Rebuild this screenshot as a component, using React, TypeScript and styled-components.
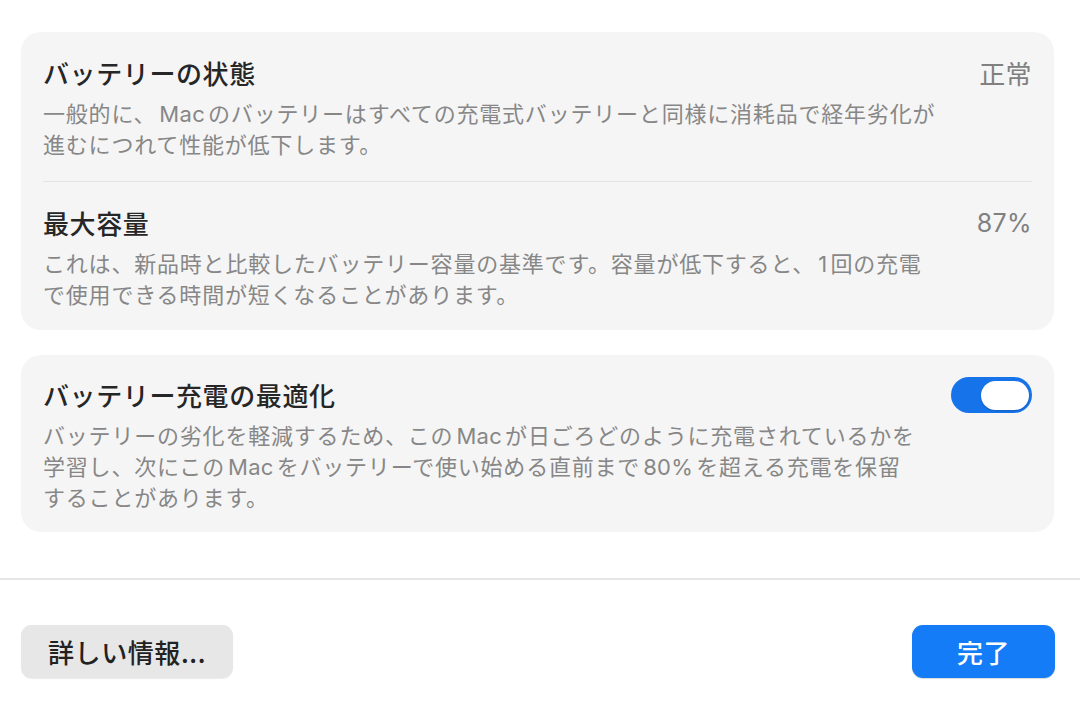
import React from "react";
import styled, { createGlobalStyle } from "styled-components";

const Global = createGlobalStyle`
  html, body { margin: 0; padding: 0; background: #ffffff; }
  body {
    font-family: "Noto Sans CJK JP", "Noto Sans", "Liberation Sans", sans-serif;
    -webkit-font-smoothing: antialiased;
  }
  * { box-sizing: border-box; }
`;

const Page = styled.div`
  width: 1080px;
  height: 702px;
  display: flex;
  flex-direction: column;
  padding-top: 32px;
  overflow: hidden;
`;

const Content = styled.div`
  display: flex;
  flex-direction: column;
  gap: 25px;
  padding: 0 26px 0 21px;
`;

const Card = styled.section`
  background: #f5f5f5;
  border-radius: 20px;
  padding: 0 22px;
  display: flex;
  flex-direction: column;
`;

const Row = styled.div<{ $top: number; $bottom: number }>`
  display: flex;
  align-items: flex-start;
  justify-content: space-between;
  gap: 24px;
  padding-top: ${(p) => p.$top}px;
  padding-bottom: ${(p) => p.$bottom}px;
`;

const TextCol = styled.div`
  display: flex;
  flex-direction: column;
  gap: 7px;
`;

const Title = styled.div`
  font-size: 26px;
  line-height: 34px;
  font-weight: 500;
  color: #262626;
  letter-spacing: 0.6px;
`;

const Desc = styled.div`
  font-size: 22px;
  line-height: 31px;
  height: ${(p: { $lines: number }) => p.$lines * 31}px;
  color: #878787;
  letter-spacing: 0.8px;
  white-space: nowrap;
`;

const Latin = styled.span`
  font-family: "Inter", "Noto Sans", sans-serif;
  font-size: 22px;
  line-height: 1;
  letter-spacing: 0.3px;
  margin: 0 3px;
`;

const Value = styled.div`
  font-size: 26px;
  line-height: 34px;
  color: #808080;
  letter-spacing: 0.4px;
`;

const ValueNum = styled(Value)`
  font-family: "Inter", "Noto Sans", sans-serif;
  font-size: 25px;
`;

const Divider = styled.div`
  height: 1px;
  background: #e4e4e4;
`;

const Toggle = styled.div<{ $on: boolean }>`
  flex: none;
  margin-top: -1px;
  width: 81px;
  height: 36px;
  border-radius: 18px;
  background: ${(p) => (p.$on ? "#1673ea" : "#d9d9d9")};
  display: flex;
  align-items: center;
  justify-content: ${(p) => (p.$on ? "flex-end" : "flex-start")};
  padding: 0 3px;
`;

const Knob = styled.div`
  width: 48px;
  height: 29px;
  border-radius: 15px;
  background: #ffffff;
  box-shadow: 0 1px 2px rgba(0, 0, 0, 0.18);
`;

const Separator = styled.div`
  margin-top: 46px;
  height: 2px;
  background: #e6e6e6;
`;

const Footer = styled.div`
  display: flex;
  justify-content: space-between;
  align-items: center;
  padding: 45px 25px 0 21px;
`;

const Button = styled.button<{ $primary?: boolean }>`
  height: 53px;
  min-width: ${(p) => (p.$primary ? "143px" : "212px")};
  border: none;
  border-radius: 11px;
  padding: 0 26px;
  font-family: inherit;
  font-size: 26px;
  font-weight: 500;
  letter-spacing: 0.6px;
  color: ${(p) => (p.$primary ? "#ffffff" : "#222222")};
  background: ${(p) => (p.$primary ? "#137cf6" : "#e7e7e7")};
  box-shadow: ${(p) =>
    p.$primary ? "0 0.5px 1px rgba(0,0,0,0.15)" : "0 0.5px 1px rgba(0,0,0,0.08)"};
  cursor: pointer;
`;

export default function App() {
  return (
    <>
      <Global />
      <Page>
        <Content>
          <Card>
            <Row $top={24} $bottom={22}>
              <TextCol>
                <Title>バッテリーの状態</Title>
                <Desc $lines={2}>
                  一般的に、<Latin>Mac</Latin>のバッテリーはすべての充電式バッテリーと同様に消耗品で経年劣化が
                  <br />
                  進むにつれて性能が低下します。
                </Desc>
              </TextCol>
              <Value>正常</Value>
            </Row>
            <Divider />
            <Row $top={24} $bottom={21}>
              <TextCol>
                <Title>最大容量</Title>
                <Desc $lines={2}>
                  これは、新品時と比較したバッテリー容量の基準です。容量が低下すると、<Latin>1</Latin>回の充電
                  <br />
                  で使用できる時間が短くなることがあります。
                </Desc>
              </TextCol>
              <ValueNum>87%</ValueNum>
            </Row>
          </Card>
          <Card>
            <Row $top={23} $bottom={20}>
              <TextCol>
                <Title>バッテリー充電の最適化</Title>
                <Desc $lines={3}>
                  バッテリーの劣化を軽減するため、この<Latin>Mac</Latin>が日ごろどのように充電されているかを
                  <br />
                  学習し、次にこの<Latin>Mac</Latin>をバッテリーで使い始める直前まで<Latin>80%</Latin>を超える充電を保留
                  <br />
                  することがあります。
                </Desc>
              </TextCol>
              <Toggle $on>
                <Knob />
              </Toggle>
            </Row>
          </Card>
        </Content>
        <Separator />
        <Footer>
          <Button>詳しい情報...</Button>
          <Button $primary>完了</Button>
        </Footer>
      </Page>
    </>
  );
}
